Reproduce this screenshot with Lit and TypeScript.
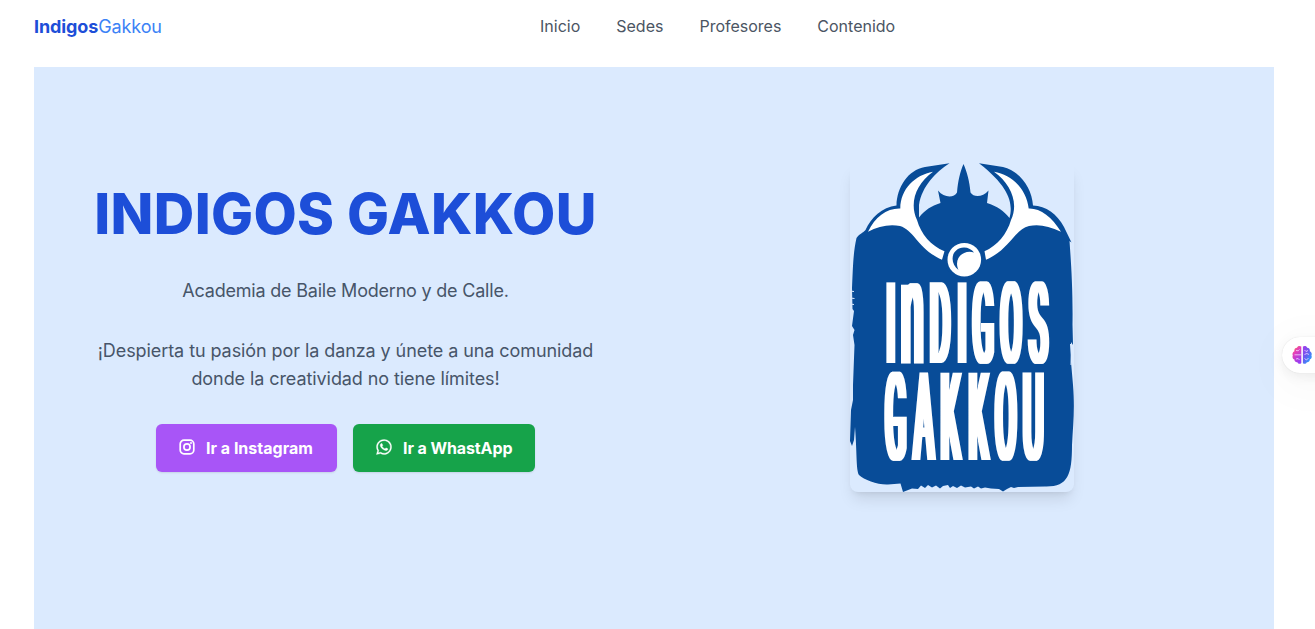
import { LitElement, html, css } from "lit";
import { customElement } from "lit/decorators.js";

@customElement("gakkou-emblem")
export class GakkouEmblem extends LitElement {
  static styles = css`
    :host { display: block; width: 224px; height: 329px; border-radius: 8px;
      box-shadow: 0 10px 15px -3px rgba(0, 0, 0, 0.1), 0 4px 6px -4px rgba(0, 0, 0, 0.1); }
    svg { display: block; width: 224px; height: 329px; }
    .ink { fill: #084c98; }
    .paper { fill: #fff; }
    .word { fill: #fff; font-family: Roboto, sans-serif; font-size: 100px; font-weight: 400; text-anchor: middle; }
  `;
  render() {
    return html`<svg viewBox="850 163 224 329" role="img">
      <defs>
        <filter id="widen" filterUnits="userSpaceOnUse" x="870" y="270" width="200" height="200">
          <feMorphology operator="dilate" radius="3 0"></feMorphology>
        </filter>
      </defs>
      <path class="ink" d="M856.5 238 C859 234 863 233 865.500 230 C871 218 882 207 896.500 205.500 C897 187 908 170 925 167 L949.500 163.300
        C936 172 922 186 919 205 L919 217.500 C925 210 931 206 940.500 203 L938 190.500 C944 198 954 198 957 192.500 C958 181 960 172 963.500 164
        C967 172 969.500 181 970.500 192.500 C974 198 983 197 988.500 190.500 L987 203 C997 206 1004 211 1009.500 218
        C1013 205 1011 188 979 163.300 L1003 167 C1020 171 1032 188 1033 205.500 C1046 206 1057 214 1064 227 L1071.500 242.500 L1069.500 241
        C1071 262 1073 290 1072.500 325 L1073 345 L1071 342 L1071 362 L1073 385 C1075 410 1073 425 1072 445 C1072 475 1068 487 1045 486.500
        L1018 487 L1014 488 L1011 487 L1007 489 L1003 491.500 L999 489 L991 488.500 L985 487.500 L981 488.500 L978 486.500 L974 488.500 L971 486.500 L965 487.500
        L961 485.500 L957 488 L953 486 L950 488 L948 485 L943 486 L940 488.500 L936 485.500 L932 487.500 L928 485 L925 488 L921 485.500 L918 489 L912 488.500 L903 492 L900.500 483.500
        L888 484.500 C878 485 864 480 859 475 C856 470 857 452 855 427 L854 440 L852 446 L850 441 L851 410 L853 400 L853 385 L854.500 345 L853 335 L854.500 330 L852 326 L854 311 L852.500 309 L852 288
        C853 267 853 254 856.500 238Z"></path>
      <path d="M850 291 L854 291.500 M850 298 L854.500 298.500 M850 304 L854 304.500" stroke="#dbeafe" stroke-width="1"></path>
      <path d="M1070.500 344 L1071.200 355 L1071 365" fill="none" stroke="#dbeafe" stroke-width="1"></path>
      <path class="paper" d="M933 171.800 C915 175 900.500 189 900.300 208.500 C887 208 875 217 868 231.800 C878 226 890 224 900 226 C914 230 919 250 942 259.700 L944.500 251.200
        C931 246 921 234 917 220 C909 203 916 184 933 171.800Z"></path>
      <path class="paper" d="M994 171.800 C1012 175 1026.500 189 1028.700 208.500 C1040 208 1052 217 1061 231.800 C1049 226 1039 224 1029 226 C1014 230 1009 250 986 259.700 L984.500 251.200
        C997 246 1007 234 1011 220 C1019 203 1011 184 994 171.800Z"></path>
      <circle class="ink" cx="964.300" cy="259.700" r="19.800"></circle>
      <circle class="paper" cx="964.300" cy="259.700" r="16.800"></circle>
      <path class="ink" d="M958.500 270 C949 263 951 248 964 247.500 C968 247.500 972 249.500 974 252.500 C964 249 953 258 958.500 270Z"></path>
      <g filter="url(#widen)">
        <text class="word" transform="translate(0 362.800) scale(.3 1.140)" x="2969.400" y="0">I</text>
        <text class="word" transform="translate(912.200 362.800) scale(.4 1.490)">n</text>
        <text class="word" transform="translate(0 362.800) scale(.3 1.140)" x="3134 3207.300 3277.300 3370 3461.700" y="0">DIGOS</text>
        <text class="word" transform="translate(0 459.500) scale(.3 1.220)" x="2985.600 3079 3168.300 3261 3352.700 3444.300" y="0">GAKKOU</text>
      </g>
    </svg>`;
  }
}

@customElement("app-root")
export class AppRoot extends LitElement {
  static styles = css`
    :host { display: block; position: relative; width: 100%; height: 629px; overflow: hidden; background: #fff; font-family: Inter, sans-serif; box-sizing: border-box; padding: 0 41px 0 34px; }
    * { box-sizing: border-box; }
    header { height: 67px; padding-bottom: 13px; display: grid; grid-template-columns: 506px 1fr; align-items: center; }
    .brand { font-size: 18px; line-height: 28px; font-weight: 700; color: #1d4ed8; letter-spacing: -0.1px; }
    .brand span { font-weight: 400; color: #3b82f6; letter-spacing: -0.12px; }
    nav { display: flex; gap: 36px; font-size: 16px; line-height: 24px; color: #4b5563; margin-top: -2px; }
    .hero { height: 562px; background: #dbeafe; display: grid; grid-template-columns: 600px 600px; gap: 16px; padding-left: 12px; }
    .copy { display: flex; flex-direction: column; align-items: center; padding: 112px 1px 0 0; text-align: center; color: #475569; }
    h1 { margin: 0; font-size: 56px; line-height: 70px; font-weight: 800; letter-spacing: 0.35px; color: #1d4ed8; white-space: nowrap; }
    p { margin: 0; font-size: 18px; line-height: 28px; white-space: nowrap; }
    .tagline { margin-top: 28px; letter-spacing: -0.21px; }
    .pitch { margin-top: 32px; letter-spacing: -0.08px; }
    .actions { display: flex; gap: 16px; margin-top: 31px; }
    .btn { display: flex; align-items: center; height: 48px; width: 181px; padding-left: 23px; gap: 11px; border-radius: 6px; color: #fff; font-size: 16px; font-weight: 700; white-space: nowrap; box-shadow: 0 1px 2px rgba(0, 0, 0, 0.1); }
    .btn svg { width: 16px; height: 16px; margin-top: -2px; }
    .insta { background: #a855f7; }
    .whats { background: #16a34a; width: 182px; letter-spacing: -0.1px; }
    .art { display: flex; justify-content: center; padding-top: 96px; }
    .pill { position: absolute; left: 1282px; top: 337px; width: 60px; height: 36px; border-radius: 18px; background: #fff; display: flex; align-items: center; padding-left: 10px;
      box-shadow: 0 0 1px rgba(0, 0, 0, 0.15), 0 4px 12px rgba(0, 0, 0, 0.06), 0 8px 50px rgba(0, 0, 0, 0.05); }
    .pill svg { width: 20px; height: 20px; }
  `;
  render() {
    return html`
      <header>
        <div class="brand">Indigos<span>Gakkou</span></div>
        <nav><a>Inicio</a><a>Sedes</a><a>Profesores</a><a>Contenido</a></nav>
      </header>
      <section class="hero">
        <div class="copy">
          <h1>INDIGOS GAKKOU</h1>
          <p class="tagline">Academia de Baile Moderno y de Calle.</p>
          <p class="pitch">¡Despierta tu pasión por la danza y únete a una comunidad<br />donde la creatividad no tiene límites!</p>
          <div class="actions">
            <a class="btn insta">
              <svg viewBox="0 0 16 16" fill="none" stroke="#fff" stroke-width="1.700">
                <rect x="1.200" y="1.200" width="13.600" height="13.600" rx="3.800"></rect>
                <circle cx="8" cy="8" r="3.100"></circle>
                <circle cx="12" cy="4.100" r="1" fill="#fff" stroke="none"></circle>
              </svg>Ir a Instagram</a>
            <a class="btn whats">
              <svg viewBox="1.500 1.500 21 21" fill="#fff" stroke="#fff" stroke-width=".4">
                <path d="M12.04 2c-5.46 0-9.91 4.45-9.91 9.91 0 1.750.46 3.450 1.320 4.950L2.050 22l5.250-1.380c1.450.79 3.080 1.210 4.740 1.210 5.460 0 9.910-4.450 9.910-9.910 0-2.650-1.030-5.140-2.900-7.010A9.816 9.816 0 0 0 12.040 2m.01 1.670c2.200 0 4.260.86 5.820 2.420a8.225 8.225 0 0 1 2.410 5.830c0 4.540-3.700 8.230-8.240 8.230-1.480 0-2.930-.39-4.190-1.150l-.3-.17-3.120.82.83-3.040-.2-.32a8.188 8.188 0 0 1-1.260-4.380c.01-4.540 3.700-8.240 8.250-8.240"></path>
                <path d="M16.570 13.990c-.25-.13-1.470-.72-1.690-.81-.23-.08-.39-.12-.56.13-.17.25-.64.81-.78.97-.14.17-.29.19-.54.06-.25-.12-1.050-.39-1.990-1.230-.74-.66-1.230-1.470-1.380-1.720-.14-.25-.02-.38.11-.51.11-.11.25-.29.37-.43s.17-.25.25-.41c.08-.17.04-.31-.02-.43s-.56-1.340-.76-1.840c-.2-.48-.41-.42-.56-.43h-.48c-.17 0-.43.06-.66.31-.22.25-.86.85-.86 2.070 0 1.220.89 2.400 1.010 2.560.12.17 1.750 2.670 4.230 3.740.59.26 1.050.41 1.410.52.59.19 1.130.16 1.560.1.48-.07 1.470-.6 1.670-1.180.21-.58.21-1.070.14-1.180s-.22-.16-.47-.29"></path>
              </svg>Ir a WhastApp</a>
          </div>
        </div>
        <div class="art"><gakkou-emblem></gakkou-emblem></div>
      </section>
      <div class="pill">
        <svg viewBox="0 0 20 20">
          <defs>
            <linearGradient id="bl" x1="0" y1="0" x2=".5" y2="1"><stop offset="0" stop-color="#ff8a3d"></stop><stop offset=".4" stop-color="#e63fb8"></stop><stop offset="1" stop-color="#9a3df0"></stop></linearGradient>
            <linearGradient id="br" x1="0" y1="0" x2=".8" y2="1"><stop offset="0" stop-color="#a53bea"></stop><stop offset=".5" stop-color="#6a5cf0"></stop><stop offset="1" stop-color="#1fa8ff"></stop></linearGradient>
          </defs>
          <path fill="url(#bl)" d="M9.300 1.500 C7.500 .4 5.500 1 5 2.800 C3 2.800 2 4.500 2.400 6.200 C.6 7 0 9 .8 10.500 C0 12 .8 14 2.400 14.500 C2.400 16.500 4 17.500 5.400 17.200 C6 19 8.300 19.400 9.300 18Z"></path>
          <path fill="url(#br)" d="M10.900 1.500 C12.700 .4 14.700 1 15.200 2.800 C17.200 2.800 18.200 4.500 17.800 6.200 C19.600 7 20.200 9 19.400 10.500 C20.200 12 19.400 14 17.800 14.500 C17.800 16.500 16.200 17.500 14.800 17.200 C14.200 19 11.900 19.400 10.900 18Z"></path>
          <path fill="none" stroke="#f3d9ff" stroke-width=".8" d="M4 5.500 Q6.500 6.500 7.500 4.500 M2.500 9.800 H9 M4 14 Q6.500 12.500 7.500 15 M12.500 5 L14 6.500 L16 5.500 M12.500 9.500 Q15 7.500 17 9.500 M12.500 13.500 L14.500 15 L16.500 13"></path>
        </svg>
      </div>`;
  }
}
